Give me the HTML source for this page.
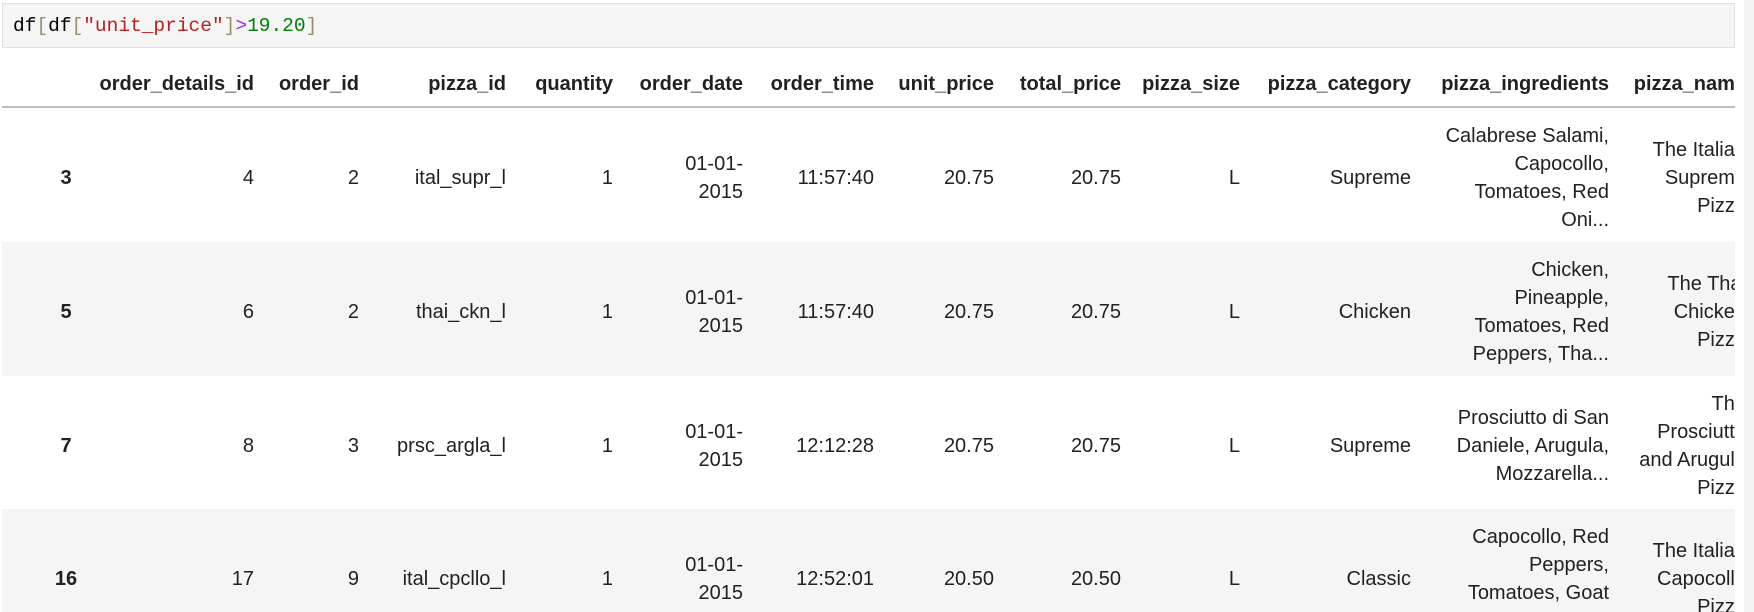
<!DOCTYPE html>
<html><head><meta charset="utf-8"><style>
*{margin:0;padding:0;box-sizing:border-box}
body{width:1754px;height:612px;overflow:hidden;background:#fff;font-family:"Liberation Sans",sans-serif;color:#212121;position:relative}
#code{position:absolute;left:2px;top:3px;width:1733px;height:45px;background:#f5f5f5;border:1px solid #e0e0e0;font-family:"Liberation Mono",monospace;font-size:19.5px;line-height:45px;padding-left:10px;color:#000}
.b{color:#998f66}.s{color:#ba2121}.o{color:#aa22ff}.n{color:#008000}
#clip{position:absolute;left:0;top:0;width:1735px;height:612px;overflow:hidden}
.bg{position:absolute;left:2px;width:1733px;height:134px;background:#f5f5f5}
.hl{position:absolute;left:2px;top:106px;width:1733px;height:2px;background:#bdbdbd}
.c{position:absolute;display:flex;align-items:center;justify-content:flex-end;text-align:right;font-size:20px;line-height:28px;height:134px;white-space:nowrap}
.h{position:absolute;top:70px;height:28px;line-height:28px;font-weight:bold;font-size:20px;white-space:nowrap;text-align:right}
.i{font-weight:bold;justify-content:center}
</style></head><body>
<div id="code">df<span class="b">[</span>df<span class="b">[</span><span class="s">"unit_price"</span><span class="b">]</span><span class="o">&gt;</span><span class="n">19.20</span><span class="b">]</span></div>
<div style="position:absolute;left:1744px;top:0;width:10px;height:612px;background:#f3f3f3"></div>
<div id="clip">
<div class="bg" style="top:242px"></div>
<div class="bg" style="top:509px"></div>
<div class="hl"></div>
<div id="t"></div>
</div>
<script>
var R=[254,359,506,613,743,874,994,1121,1240,1411,1609,1746];
var H=["order_details_id","order_id","pizza_id","quantity","order_date","order_time","unit_price","total_price","pizza_size","pizza_category","pizza_ingredients","pizza_name"];
var T=[111,245,379,512];
var rows=[
["3","4","2","ital_supr_l","1","01-01-<br>2015","11:57:40","20.75","20.75","L","Supreme","Calabrese Salami,<br>Capocollo,<br>Tomatoes, Red<br>Oni...","The Italian<br>Supreme<br>Pizza"],
["5","6","2","thai_ckn_l","1","01-01-<br>2015","11:57:40","20.75","20.75","L","Chicken","Chicken,<br>Pineapple,<br>Tomatoes, Red<br>Peppers, Tha...","The Thai<br>Chicken<br>Pizza"],
["7","8","3","prsc_argla_l","1","01-01-<br>2015","12:12:28","20.75","20.75","L","Supreme","Prosciutto di San<br>Daniele, Arugula,<br>Mozzarella...","The<br>Prosciutto<br>and Arugula<br>Pizza"],
["16","17","9","ital_cpcllo_l","1","01-01-<br>2015","12:52:01","20.50","20.50","L","Classic","Capocollo, Red<br>Peppers,<br>Tomatoes, Goat<br>Cheese...","The Italian<br>Capocollo<br>Pizza"]];
var W=1735,h="";
for(var k=0;k<H.length;k++){h+='<div class="h" style="right:'+(W-R[k])+'px">'+H[k]+'</div>';}
for(var r=0;r<4;r++){
 h+='<div class="c i" style="left:36px;width:60px;top:'+T[r]+'px">'+rows[r][0]+'</div>';
 for(var k=0;k<12;k++){h+='<div class="c" style="right:'+(W-R[k])+'px;top:'+T[r]+'px">'+rows[r][k+1]+'</div>';}
}
document.getElementById("t").innerHTML=h;
</script>
</body></html>
